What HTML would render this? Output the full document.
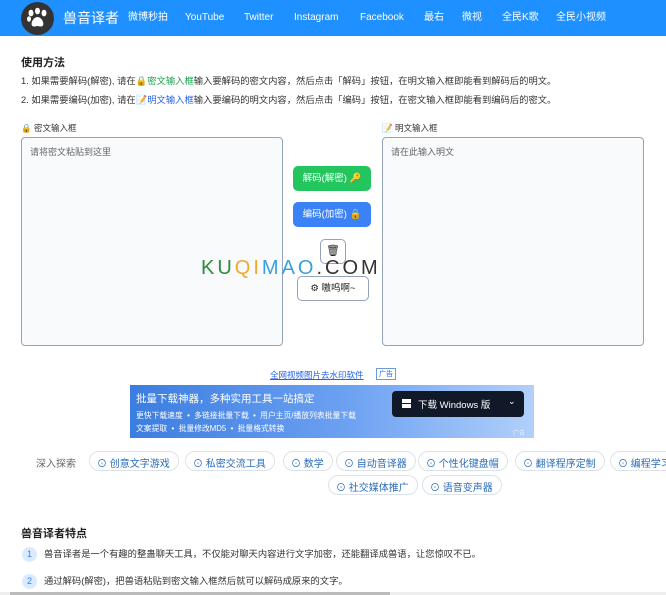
<!DOCTYPE html>
<html><head><meta charset="utf-8"><style>
*{box-sizing:border-box;margin:0;padding:0}
body{width:666px;height:595px;overflow:hidden;background:#fff;font-family:"Liberation Sans","Noto Sans CJK SC",sans-serif;color:#222;position:relative}
.a{position:absolute;white-space:nowrap}
.hdr{position:absolute;left:0;top:0;width:666px;height:36px;background:#1e90ff}
.nav{top:12px;font-size:10px;line-height:12px;color:#fff}
.ta{position:absolute;top:137px;width:262px;height:209px;border:1px solid #94a3b8;border-radius:4px;background:#f8fafc;font-size:9px;color:#666;padding:7px 8px}
.btn{position:absolute;border-radius:5px;font-size:9.5px;color:#fff;text-align:center}
.tag{position:absolute;height:20px;border:1px solid #dbe3ea;border-radius:10px;font-size:10px;color:#2a6bb8;padding:3px 8px 0 7px;white-space:nowrap}
.num{position:absolute;left:22px;width:15px;height:15px;border-radius:50%;background:#dbeafe;color:#3b82f6;font-size:9px;text-align:center;line-height:15px}
.p{font-size:9.3px;line-height:12px;color:#333}
</style></head><body>
<div class="hdr"></div>
<div class="a" style="left:21px;top:2px;width:33px;height:33px;border-radius:50%;background:#333"></div>
<svg class="a" style="left:25px;top:6px" width="25" height="25" viewBox="0 0 25 25"><g fill="#fff"><ellipse cx="6" cy="7" rx="2.5" ry="3.3"/><ellipse cx="12.5" cy="5" rx="2.5" ry="3.3"/><ellipse cx="19" cy="7" rx="2.5" ry="3.3"/><ellipse cx="4" cy="13" rx="2" ry="2.8"/><path d="M12.5 11c-4 0-7 6-5.5 8.5 1.5 2 4 0.5 5.5 0.5s4 1.5 5.5-0.5C19.5 17 16.5 11 12.5 11z"/></g></svg>
<div class="a" style="left:63px;top:9px;font-size:14px;line-height:18px;color:#fff">兽音译者</div>
<div class="a nav" style="left:128px">微博秒拍</div>
<div class="a nav" style="left:185px">YouTube</div>
<div class="a nav" style="left:244px">Twitter</div>
<div class="a nav" style="left:294px">Instagram</div>
<div class="a nav" style="left:360px">Facebook</div>
<div class="a nav" style="left:424px">最右</div>
<div class="a nav" style="left:462px">微视</div>
<div class="a nav" style="left:502px">全民K歌</div>
<div class="a nav" style="left:556px">全民小视频</div>

<div class="a" style="left:21px;top:54px;font-size:11px;font-weight:bold">使用方法</div>
<div class="a p" style="left:21px;top:75px">1. 如果需要解码(解密), 请在🔒<span style="color:#16a34a">密文输入框</span>输入要解码的密文内容，然后点击「解码」按钮，在明文输入框即能看到解码后的明文。</div>
<div class="a p" style="left:21px;top:94px">2. 如果需要编码(加密), 请在📝<span style="color:#2563eb">明文输入框</span>输入要编码的明文内容，然后点击「编码」按钮，在密文输入框即能看到编码后的密文。</div>
<div class="a" style="left:21px;top:122px;font-size:8.5px;color:#333">🔒 密文输入框</div>
<div class="a" style="left:382px;top:122px;font-size:8.5px;color:#333">📝 明文输入框</div>
<div class="ta" style="left:21px">请将密文粘贴到这里</div>
<div class="ta" style="left:382px">请在此输入明文</div>
<div class="btn" style="left:293px;top:166px;width:78px;height:25px;background:#22c55e;line-height:25px">解码(解密) 🔑</div>
<div class="btn" style="left:293px;top:202px;width:78px;height:25px;background:#3b82f6;line-height:25px">编码(加密) 🔒</div>
<div class="btn" style="left:320px;top:239px;width:26px;height:25px;border:1px solid #94a3b8;background:#fff;color:#222;line-height:23px;font-size:11px">🗑</div>
<div class="btn" style="left:297px;top:276px;width:72px;height:25px;border:1px solid #94a3b8;background:#fff;color:#222;line-height:23px">⚙ 嗷呜啊~</div>
<div class="a" style="left:201px;top:257px;font-size:20px;letter-spacing:3px;font-family:'Liberation Sans',sans-serif"><span style="color:#2e8b3a">KU</span><span style="color:#f0a830">QI</span><span style="color:#3aa0dc">MAO</span><span style="color:#333">.COM</span></div>

<div class="a" style="left:270px;top:369px;font-size:8.5px;color:#2563eb;text-decoration:underline">全网视频图片去水印软件</div>
<div class="a" style="left:376px;top:368px;font-size:7px;color:#2563eb;border:1px solid #6b9ae0;padding:0 2px">广告</div>
<div class="a" style="left:130px;top:385px;width:404px;height:53px;background:linear-gradient(90deg,#3b7de0,#6ea2f2 55%,#b2d0fa)"></div>
<div class="a" style="left:136px;top:391px;font-size:10.5px;color:#fff">批量下载神器，多种实用工具一站搞定</div>
<div class="a" style="left:136px;top:410px;font-size:7.8px;color:#fff">更快下载速度 &nbsp;• &nbsp;多链接批量下载 &nbsp;• &nbsp;用户主页/播放列表批量下载</div>
<div class="a" style="left:136px;top:423px;font-size:7.8px;color:#fff">文案提取 &nbsp;• &nbsp;批量修改MD5 &nbsp;• &nbsp;批量格式转换</div>
<div class="a" style="left:513px;top:428px;font-size:6px;color:#e8f0ff">广告</div>
<div class="a" style="left:392px;top:391px;width:132px;height:26px;background:#111827;border-radius:4px"></div>
<div class="a" style="left:402px;top:399px;width:9px;height:9px;background:linear-gradient(#fff 0 45%,transparent 45% 55%,#fff 55%)"></div>
<div class="a" style="left:418px;top:397px;font-size:9.5px;color:#fff">下载 Windows 版</div>
<div class="a" style="left:508px;top:396px;font-size:9px;color:#fff">⌄</div>

<div class="a" style="left:36px;top:455px;font-size:10px;color:#666">深入探索</div>
<div class="tag" style="left:89px;top:451px">⊙ 创意文字游戏</div>
<div class="tag" style="left:185px;top:451px">⊙ 私密交流工具</div>
<div class="tag" style="left:283px;top:451px">⊙ 数学</div>
<div class="tag" style="left:336px;top:451px">⊙ 自动音译器</div>
<div class="tag" style="left:418px;top:451px">⊙ 个性化键盘帽</div>
<div class="tag" style="left:515px;top:451px">⊙ 翻译程序定制</div>
<div class="tag" style="left:610px;top:451px">⊙ 编程学习</div>
<div class="tag" style="left:328px;top:475px">⊙ 社交媒体推广</div>
<div class="tag" style="left:422px;top:475px">⊙ 语音变声器</div>

<div class="a" style="left:21px;top:525px;font-size:11px;font-weight:bold">兽音译者特点</div>
<div class="num" style="top:547px">1</div>
<div class="a p" style="left:44px;top:548px">兽音译者是一个有趣的整蛊聊天工具，不仅能对聊天内容进行文字加密，还能翻译成兽语，让您惊叹不已。</div>
<div class="num" style="top:574px">2</div>
<div class="a p" style="left:44px;top:575px">通过解码(解密)，把兽语粘贴到密文输入框然后就可以解码成原来的文字。</div>
<div class="a" style="left:0;top:592px;width:666px;height:3px;background:#eee"></div>
<div class="a" style="left:10px;top:592px;width:380px;height:3px;background:#bbb"></div>
</body></html>
